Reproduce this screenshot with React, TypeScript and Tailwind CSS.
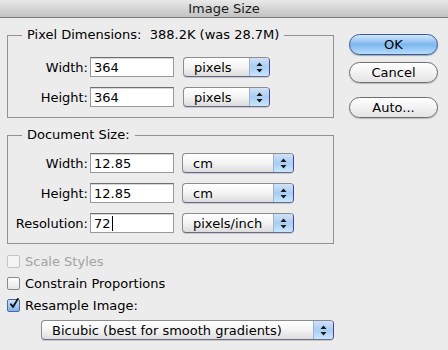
import React from "react";

const font = { fontFamily: '"DejaVu Sans", "Liberation Sans", sans-serif' };

function TextBox({ value, caret }: { value: string; caret?: boolean }) {
  return (
    <div className="flex h-[20px] w-[84px] shrink-0 items-center border border-[#9a9a9a] border-t-[#6f6f6f] bg-white pl-[3px] text-[13px] leading-none text-black shadow-[inset_0_1px_0_#d8d8d8]">
      {value}
      {caret && <span className="ml-[1px] h-[15px] w-px bg-black" />}
    </div>
  );
}

function Arrows() {
  return (
    <svg width="7" height="11" viewBox="0 0 7 11" aria-hidden>
      <path d="M3.5 0.5 L6.5 4 L0.5 4 Z" fill="#1a1a1a" />
      <path d="M0.5 7 L6.5 7 L3.5 10.5 Z" fill="#1a1a1a" />
    </svg>
  );
}

function Popup({ label, w }: { label: string; w: string }) {
  return (
    <div
      className={`flex h-[20px] ${w} shrink-0 overflow-hidden rounded-[4px] border border-[#8c8c8c] border-r-[#4a3fa0] border-b-[#6a6a8a] bg-gradient-to-b from-white via-[#f4f4f4] to-[#dcdcdc] text-[13px] leading-none text-black shadow-[0_1px_0_#c8c8c8]`}
    >
      <div className="flex flex-1 items-center pl-[10px]">{label}</div>
      <div className="flex w-[20px] items-center justify-center border-l border-[#9ab4d6] bg-gradient-to-b from-[#cfe2f8] via-[#a9cdf2] to-[#c8e6fc]">
        <Arrows />
      </div>
    </div>
  );
}

function Row({ label, value, unit, uw, gap, caret }: { label: string; value: string; unit: string; uw: string; gap: string; caret?: boolean }) {
  return (
    <div className="flex h-[20px] items-center">
      <div className="w-[82px] shrink-0 pr-[2px] text-right text-[13px] leading-none text-black">{label}</div>
      <TextBox value={value} caret={caret} />
      <div className={gap} />
      <Popup label={unit} w={uw} />
    </div>
  );
}

function Group({ title, children, className }: { title: string; children: React.ReactNode; className: string }) {
  return (
    <div className={`border border-[#939393] ${className}`}>
      <div className="-mt-[9px] ml-[14px] w-fit whitespace-pre bg-[#ececec] px-[5px] text-[13px] leading-[16px] text-black">{title}</div>
      {children}
    </div>
  );
}

function Check({ label, checked, disabled }: { label: string; checked?: boolean; disabled?: boolean }) {
  return (
    <div className="flex h-[22px] items-center">
      <div
        className={`relative flex h-[13px] w-[13px] shrink-0 items-center justify-center rounded-[2px] border ${
          disabled ? "border-[#c4c4c4] bg-[#f4f4f4]" : checked ? "border-[#4a6aa0] bg-gradient-to-b from-[#cfe2f8] to-[#7fb3ea]" : "border-[#8a8a8a] bg-gradient-to-b from-white to-[#e6e6e6]"
        }`}
      >
        {checked && (
          <svg width="13" height="15" viewBox="0 0 13 15" className="-mt-[4px] ml-[1px]" aria-hidden>
            <path d="M2.5 8.5 L5.2 12 L11.5 1.5" fill="none" stroke="#111" strokeWidth="2.4" strokeLinecap="round" strokeLinejoin="round" />
          </svg>
        )}
      </div>
      <span className={`ml-[5px] text-[13px] leading-none ${disabled ? "text-[#a3a3a3]" : "text-black"}`}>{label}</span>
    </div>
  );
}

function Button({ label, primary, className }: { label: string; primary?: boolean; className?: string }) {
  return (
    <div
      className={`flex h-[21px] w-[89px] items-center justify-center rounded-full border text-[13px] leading-none text-black ${
        primary
          ? "border-[#3e5a96] bg-gradient-to-b from-[#d4e7fa] via-[#7db8f0] to-[#b6dcfb] shadow-[0_1px_1px_#9aa]"
          : "border-[#6e6e6e] bg-gradient-to-b from-white via-[#f2f2f2] to-[#e4e4e4] shadow-[0_1px_1px_#bbb]"
      } ${className ?? ""}`}
    >
      {label}
    </div>
  );
}

export default function App() {
  return (
    <div style={font} className="h-[350px] w-[448px] overflow-hidden bg-[#ececec]">
      <div className="flex h-[18px] items-center justify-center border-b border-[#7a7a7a] bg-gradient-to-b from-[#e9e9e9] to-[#c2c2c2] text-[13px] leading-none text-[#1a1a1a]">
        Image Size
      </div>
      <div className="flex pl-[7px]">
        <div className="w-[327px] shrink-0">
          <Group title="Pixel Dimensions:  388.2K (was 28.7M)" className="mt-[17px] pb-[10px]">
            <div className="mt-[14px] flex flex-col gap-[10px]">
              <Row label="Width:" value="364" unit="pixels" uw="w-[87px]" gap="w-[9px]" />
              <Row label="Height:" value="364" unit="pixels" uw="w-[87px]" gap="w-[9px]" />
            </div>
          </Group>
          <Group title="Document Size:" className="mt-[17px] pb-[10px]">
            <div className="mt-[10px] flex flex-col gap-[10px]">
              <Row label="Width:" value="12.85" unit="cm" uw="w-[112px]" gap="w-[8px]" />
              <Row label="Height:" value="12.85" unit="cm" uw="w-[112px]" gap="w-[8px]" />
              <Row label="Resolution:" value="72" unit="pixels/inch" uw="w-[112px]" gap="w-[8px]" caret />
            </div>
          </Group>
          <div className="mt-[6px]">
            <Check label="Scale Styles" disabled />
            <Check label="Constrain Proportions" />
            <Check label="Resample Image:" checked />
          </div>
          <div className="ml-[34px] mt-[4px]">
            <Popup label="Bicubic (best for smooth gradients)" w="w-[293px]" />
          </div>
        </div>
        <div className="ml-[15px] flex flex-col">
          <Button label="OK" primary className="mt-[16px]" />
          <Button label="Cancel" className="mt-[7px]" />
          <Button label="Auto..." className="mt-[14px]" />
        </div>
      </div>
    </div>
  );
}
